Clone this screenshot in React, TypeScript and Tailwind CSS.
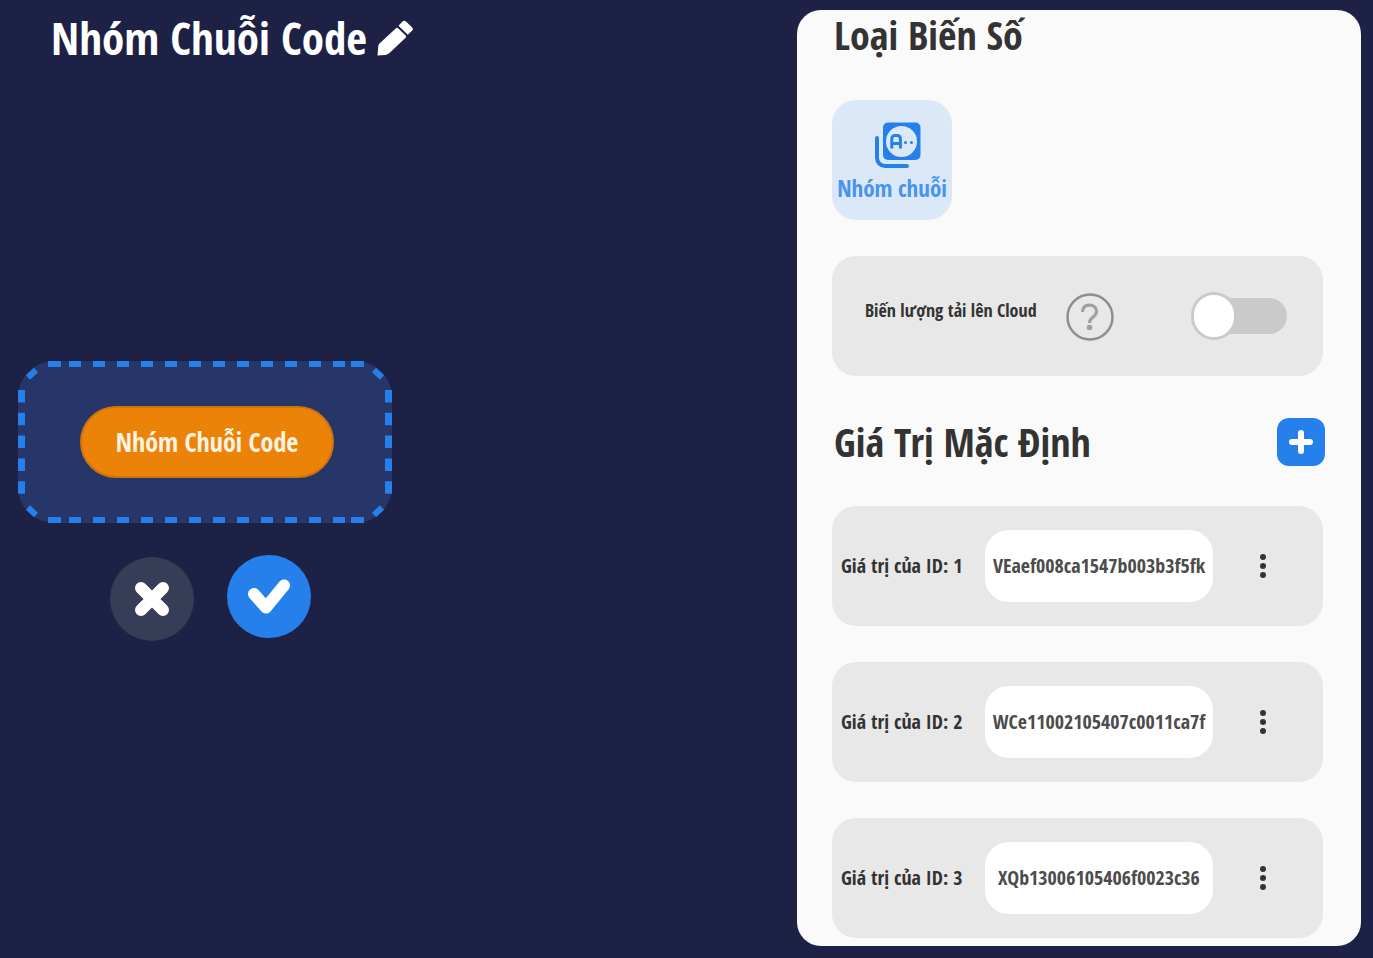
import { useState } from "react";

const initialValues = [
  { id: 1, value: "VEaef008ca1547b003b3f5fk" },
  { id: 2, value: "WCe11002105407c0011ca7f" },
  { id: 3, value: "XQb13006105406f0023c36" },
];

function PencilIcon() {
  return (
    <svg viewBox="0 0 36 36" className="h-9 w-9" fill="#fff" aria-hidden="true">
      <path d="M0.500 35.500 1.300 26q.3-1.800 1.700-3L19 8.300a1.500 1.500 0 0 1 2.100 0l7.500 7.200a1.500 1.500 0 0 1 0 2.200L12.500 33q-2 1.700-4 1.900z" />
      <path d="M21.500 5.800 25.500 1.500a2.500 2.500 0 0 1 3.500 0l6 5.800a2.500 2.500 0 0 1 0 3.500l-4.200 4z" />
    </svg>
  );
}

function StringGroupIcon() {
  return (
    <svg viewBox="0 0 46 46" className="h-[46px] w-[46px]" aria-hidden="true">
      <rect x="8" y="0.500" width="37.500" height="37.500" rx="5" fill="#2680eb" />
      <circle cx="26.500" cy="19.500" r="15.500" fill="#dae8f8" />
      <path d="M2 16v20a8 8 0 0 0 8 8h22" fill="none" stroke="#2680eb" strokeWidth="4" strokeLinecap="round" />
      <path d="M16.800 26.500v-10a3 3 0 0 1 3-3h2.600a3 3 0 0 1 3 3v10M16.800 21.500h8.600" fill="none" stroke="#2680eb" strokeWidth="3" />
      <circle cx="30.500" cy="20.500" r="1.500" fill="#2680eb" />
      <circle cx="36.500" cy="20.500" r="1.500" fill="#2680eb" />
    </svg>
  );
}

function DashedOutline() {
  return (
    <svg viewBox="0 0 374 162" className="pointer-events-none absolute inset-0 h-full w-full" fill="none" stroke="#2680eb" strokeWidth="6" aria-hidden="true">
      <path d="M51 3H327M51 159H327" strokeDasharray="12 12" />
      <path d="M30 3h13M333 3h13M30 159h13M333 159h13" />
      <path d="M3.500 29V133M370.500 29V133" strokeWidth="7" strokeDasharray="12.500 10.300" />
      <path d="M10 16.500 18 9M364 16.500 356 9M10 146.500 18 154M364 146.500 356 154" />
    </svg>
  );
}

export default function App() {
  const [uploaded, setUploaded] = useState(false);
  const [values, setValues] = useState(initialValues);

  return (
    <div className="flex min-h-screen items-start justify-between bg-[#1c2145] pr-3 font-['Open_Sans_Condensed','Noto_Sans',sans-serif] font-semibold">
      <main className="flex flex-col pt-1 pl-[18px]">
        <div className="flex items-center gap-2.5 pl-[33px] text-white">
          <h1 className="text-[45px] leading-[68px] whitespace-nowrap">Nhóm Chuỗi Code</h1>
          <button type="button" aria-label="Sửa">
            <PencilIcon />
          </button>
        </div>
        <section className="relative mt-[289px] flex h-[162px] w-[374px] items-center justify-center rounded-[36px] bg-[#273668] pl-1">
          <DashedOutline />
          <div className="flex h-[72px] w-[254px] items-center justify-center rounded-full border-2 border-[#cf730b] bg-[#ec8309] text-[26px] whitespace-nowrap text-[#fff3e2]">
            Nhóm Chuỗi Code
          </div>
        </section>
        <div className="mt-8 flex gap-[33px] pl-[92px]">
          <button type="button" aria-label="Hủy" className="mt-0.5 flex h-[84px] w-[84px] items-center justify-center rounded-full bg-[#363d57]">
            <svg viewBox="0 0 34 34" className="h-[34px] w-[34px]" fill="none" stroke="#fff" strokeWidth="12" strokeLinecap="round" aria-hidden="true">
              <path d="M6 6 28 28M28 6 6 28" />
            </svg>
          </button>
          <button type="button" aria-label="Xác nhận" className="flex h-[83px] w-[84px] items-center justify-center rounded-full bg-[#2680eb]">
            <svg viewBox="0 0 42 36" className="h-9 w-[42px]" fill="none" stroke="#fff" strokeWidth="12" strokeLinecap="round" strokeLinejoin="round" aria-hidden="true">
              <path d="M6 15 18 28.500 36 6.500" />
            </svg>
          </button>
        </div>
      </main>

      <aside className="mt-2.5 mb-3 w-[564px] rounded-3xl bg-[#fafafa] pr-[38px] pb-2 pl-[35px] text-[#333]">
        <h2 className="pl-0.5 text-[40px] leading-[50px] whitespace-nowrap">Loại Biến Số</h2>
        <button type="button" className="mt-10 flex h-[120px] w-[120px] flex-col items-center rounded-3xl bg-[#dae8f8] pt-[22px] text-[23px] whitespace-nowrap text-[#4793ee]">
          <span className="pl-3">
            <StringGroupIcon />
          </span>
          <span className="leading-10">Nhóm chuỗi</span>
        </button>

        <div className="mt-9 flex h-[120px] items-center rounded-3xl bg-[#e8e8e8] pr-9 pl-[33px]">
          <label htmlFor="cloud" className="w-[171px] pb-3 text-lg whitespace-nowrap">
            Biến lượng tải lên Cloud
          </label>
          <button type="button" aria-label="Trợ giúp" className="ml-[30px] pt-0.5">
            <svg viewBox="0 0 48 48" className="h-12 w-12" fill="none" stroke="#8e8e8e" strokeWidth="2.500" aria-hidden="true">
              <circle cx="24" cy="24" r="22.500" />
              <path d="M16.500 19c.3-4.500 3-6.800 7-6.800 4.200 0 7 2.500 7 6.300 0 5.500-7 5.500-7 11.500" strokeWidth="3.200" stroke="#a0a0a0" />
              <circle cx="23.500" cy="34.500" r="2.800" fill="#a0a0a0" stroke="none" />
            </svg>
          </button>
          <label className="relative ml-auto flex h-12 w-24 cursor-pointer items-center">
            <input id="cloud" type="checkbox" checked={uploaded} onChange={(e) => setUploaded(e.target.checked)} className="peer sr-only" />
            <span className="ml-2 h-9 w-full rounded-full bg-[#cacaca] peer-checked:bg-[#2680eb]" />
            <span className="absolute left-0 h-12 w-[46px] rounded-full border-[3px] border-[#cacaca] bg-white peer-checked:left-12" />
          </label>
        </div>

        <div className="-mr-0.5 mt-9 flex items-center justify-between">
          <h2 className="pl-0.5 text-[40px] leading-[60px] whitespace-nowrap">Giá Trị Mặc Định</h2>
          <button type="button" aria-label="Thêm" className="flex h-12 w-12 items-center justify-center rounded-xl bg-[#2680eb]">
            <svg viewBox="0 0 24 24" className="h-6 w-6" stroke="#fff" strokeWidth="6" strokeLinecap="round" aria-hidden="true">
              <path d="M12 3v18M3 12h18" />
            </svg>
          </button>
        </div>

        <ul className="mt-[34px] flex flex-col gap-9">
          {values.map((item) => (
            <li key={item.id} className="flex h-[120px] items-center rounded-3xl bg-[#e8e8e8] pr-12 pl-[9px] text-xl">
              <label htmlFor={`value-${item.id}`} className="w-36 whitespace-nowrap">
                Giá trị của ID: {item.id}
              </label>
              <input
                id={`value-${item.id}`}
                value={item.value}
                onChange={(e) => setValues(values.map((v) => (v.id === item.id ? { ...v, value: e.target.value } : v)))}
                className="h-[72px] w-[228px] rounded-3xl bg-white pb-0.5 text-center text-[#4c4c4c]"
              />
              <button type="button" aria-label="Tùy chọn" className="ml-auto flex h-12 w-6 items-center justify-center">
                <svg viewBox="0 0 6 24" className="h-6 w-1.5" fill="#333" aria-hidden="true">
                  <circle cx="3" cy="3" r="3" />
                  <circle cx="3" cy="12" r="3" />
                  <circle cx="3" cy="21" r="3" />
                </svg>
              </button>
            </li>
          ))}
        </ul>
      </aside>
    </div>
  );
}
